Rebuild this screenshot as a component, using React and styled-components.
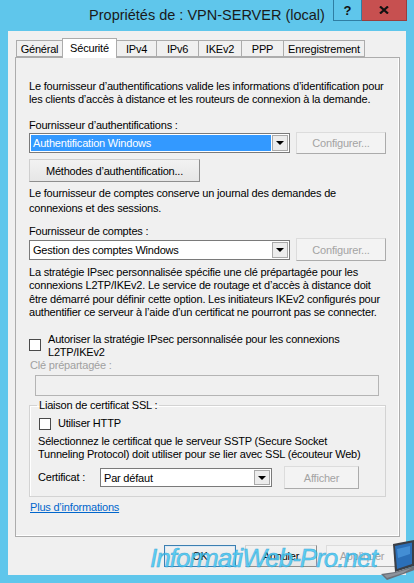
import React from "react";
import styled, { createGlobalStyle, css } from "styled-components";

const Global = createGlobalStyle`
  html, body { margin: 0; padding: 0; background: #5fc6eb; }
  body { font-family: "Liberation Sans", Arial, sans-serif; }
  * { box-sizing: border-box; }
`;

const Window = styled.div`
  position: relative;
  width: 414px;
  height: 583px;
  background: #5fc6eb;
  display: flex;
  flex-direction: column;
  overflow: hidden;
`;

const TitleBar = styled.div`
  height: 31px;
  flex: none;
  display: grid;
  grid-template-columns: 1fr auto 1fr;
  align-items: start;
`;

const Title = styled.div`
  grid-column: 2;
  padding-top: 7px;
  font-size: 14.5px;
  line-height: 16px;
  color: #1a1a1a;
  white-space: nowrap;
`;

const Caption = styled.div`
  grid-column: 3;
  justify-self: end;
  margin-right: 7px;
  display: flex;
`;

const CapBtn = styled.div`
  height: 21px;
  width: ${(p) => p.$w}px;
  display: flex;
  align-items: center;
  justify-content: center;
  border: 1px solid ${(p) => (p.$close ? "#9a3d3d" : "#2f7ea3")};
  border-top: none;
  background: ${(p) => (p.$close ? "#c75050" : "#5fc6eb")};
  font-weight: bold;
  font-size: 13px;
  color: #111;
  & + & { border-left: none; }
`;

const Client = styled.div`
  flex: 1;
  margin: 0 8px 8px;
  background: #f0f0f0;
  display: flex;
  flex-direction: column;
  padding: 7px 6px 8px 7px;
`;

const TabStrip = styled.div`
  display: flex;
  align-items: flex-end;
  height: 20px;
  padding-left: 1px;
  margin-bottom: -1px;
  position: relative;
  z-index: 2;
`;

const Tab = styled.div`
  width: ${(p) => p.$w}px;
  height: ${(p) => (p.$active ? 20 : 17)}px;
  margin-bottom: ${(p) => (p.$active ? 0 : 1)}px;
  border: 1px solid #acacac;
  border-bottom: ${(p) => (p.$active ? "none" : "1px solid #acacac")};
  background: ${(p) => (p.$active ? "#ffffff" : "#f0f0f0")};
  font-size: 11px;
  letter-spacing: -0.2px;
  color: #000;
  display: flex;
  justify-content: center;
  align-items: ${(p) => (p.$active ? "flex-start" : "center")};
  padding-top: ${(p) => (p.$active ? 3 : 1)}px;
  & + & { margin-left: -1px; }
`;

const Panel = styled.div`
  height: 480px;
  border: 1px solid #acacac;
  background: #f0f0f0;
  box-shadow: inset -1px -1px 0 #ffffff;
  padding: 0 13px;
  display: flex;
  flex-direction: column;
  font-size: 11px;
  letter-spacing: -0.2px;
  color: #000;
`;

const Para = styled.div`
  margin-top: ${(p) => p.$mt}px;
  line-height: ${(p) => p.$lh || 13}px;
  white-space: nowrap;
`;

const Label = styled.div`
  margin-top: ${(p) => p.$mt}px;
  margin-left: ${(p) => p.$ml || 0}px;
  line-height: 13px;
  color: ${(p) => (p.$disabled ? "#a0a0a0" : "#000")};
`;

const Row = styled.div`
  margin-top: ${(p) => p.$mt || 0}px;
  height: ${(p) => p.$h}px;
  display: flex;
  align-items: center;
  justify-content: ${(p) => (p.$spread ? "space-between" : "flex-start")};
`;

const Select = styled.div`
  width: ${(p) => p.$w}px;
  height: ${(p) => p.$h || 20}px;
  border: 1px solid #7a7a7a;
  background: #fff;
  display: flex;
  align-items: stretch;
  padding: 1px;
`;

const SelectValue = styled.div`
  flex: 1;
  display: flex;
  align-items: center;
  padding-left: 2px;
  background: ${(p) => (p.$highlight ? "#3399ff" : "transparent")};
  color: ${(p) => (p.$highlight ? "#fff" : "#000")};
  white-space: nowrap;
  overflow: hidden;
`;

const Arrow = styled.div`
  width: 16px;
  margin-left: 1px;
  border: 1px solid #a9a9a9;
  background: #ececec;
  display: flex;
  align-items: center;
  justify-content: center;
  &::after {
    content: "";
    border-left: 4px solid transparent;
    border-right: 4px solid transparent;
    border-top: 4px solid #000;
  }
`;

const Button = styled.div`
  width: ${(p) => p.$w}px;
  height: ${(p) => p.$h || 22}px;
  margin-top: ${(p) => p.$mt || 0}px;
  margin-left: ${(p) => p.$ml || 0}px;
  flex: none;
  display: flex;
  align-items: center;
  justify-content: center;
  font-size: 11px;
  letter-spacing: -0.2px;
  white-space: nowrap;
  border: 1px solid;
  border-color: #cfcfcf #8e8e8e #8e8e8e #cfcfcf;
  background: linear-gradient(#f2f2f2, #e6e6e6);
  color: #000;
  ${(p) =>
    p.$disabled &&
    css`
      color: #a3a3a3;
      background: #f3f3f3;
      border-color: #dcdcdc #ababab #ababab #dcdcdc;
    `}
  ${(p) =>
    p.$default &&
    css`
      border-color: #3c7fb1;
      box-shadow: inset 0 0 0 1px #dbeaf6;
    `}
`;

const CheckRow = styled.div`
  margin-top: ${(p) => p.$mt}px;
  margin-left: ${(p) => p.$ml || 0}px;
  display: flex;
  align-items: flex-start;
  gap: ${(p) => p.$gap}px;
`;

const Box = styled.div`
  flex: none;
  width: 12px;
  height: 12px;
  margin-top: ${(p) => p.$mt || 0}px;
  border: 1px solid #4a4a4a;
  background: #fff;
`;

const CheckLabel = styled.div`
  line-height: ${(p) => p.$lh || 13}px;
`;

const Input = styled.div`
  margin: 3px 0 0 6px;
  width: 344px;
  height: 21px;
  border: 1px solid #b4b4b4;
  background: #f0f0f0;
`;

const Group = styled.fieldset`
  margin: 3px 0 0 0;
  padding: 0 8px 7px 8px;
  border: 1px solid #d3d3d3;
  box-shadow: inset 1px 1px 0 #fff;
  min-width: 0;
`;

const Legend = styled.legend`
  padding: 0 2px;
  margin-left: -1px;
  line-height: 13px;
`;

const CertLabel = styled.div`
  width: 62px;
  line-height: 13px;
`;

const Link = styled.a`
  margin-top: 4px;
  margin-left: 1px;
  line-height: 13px;
  color: #0066cc;
  text-decoration: underline;
  align-self: flex-start;
`;

const Footer = styled.div`
  margin-top: 8px;
  display: flex;
  justify-content: flex-end;
  gap: 9px;
  padding-right: 2px;
`;

const Watermark = styled.div`
  position: absolute;
  left: 150px;
  top: 545px;
  font-family: "Liberation Sans", Arial, sans-serif;
  font-style: italic;
  font-size: 26px;
  line-height: 26px;
  letter-spacing: -1px;
  color: #48caf3;
  -webkit-text-stroke: 0.5px #2a9fd6;
  opacity: 0.88;
  white-space: nowrap;
  pointer-events: none;
`;

const Laptop = styled.svg`
  position: absolute;
  left: 381px;
  top: 540px;
`;

export default function App() {
  return (
    <Window>
      <Global />
      <TitleBar>
        <Title>Propriétés de : VPN-SERVER (local)</Title>
        <Caption>
          <CapBtn $w={29}>?</CapBtn>
          <CapBtn $w={45} $close>
            <svg width="10" height="8" viewBox="0 0 10 8">
              <path d="M1 0.5 L9 7.5 M9 0.5 L1 7.5" stroke="#111" strokeWidth="2.2" />
            </svg>
          </CapBtn>
        </Caption>
      </TitleBar>
      <Client>
        <TabStrip>
          <Tab $w={47}>Général</Tab>
          <Tab $w={55} $active>Sécurité</Tab>
          <Tab $w={41}>IPv4</Tab>
          <Tab $w={43}>IPv6</Tab>
          <Tab $w={44}>IKEv2</Tab>
          <Tab $w={43}>PPP</Tab>
          <Tab $w={82}>Enregistrement</Tab>
        </TabStrip>
        <Panel>
          <Para $mt={22}>
            Le fournisseur d’authentifications valide les informations d’identification pour
            <br />
            les clients d’accès à distance et les routeurs de connexion à la demande.
          </Para>
          <Label $mt={13}>Fournisseur d’authentifications :</Label>
          <Row $h={22} $spread>
            <Select $w={261}>
              <SelectValue $highlight>Authentification Windows</SelectValue>
              <Arrow />
            </Select>
            <Button $w={90} $disabled>Configurer...</Button>
          </Row>
          <Button $w={171} $h={23} $mt={5}>Méthodes d’authentification...</Button>
          <Para $mt={4} $lh={15}>
            Le fournisseur de comptes conserve un journal des demandes de
            <br />
            connexions et des sessions.
          </Para>
          <Label $mt={9}>Fournisseur de comptes :</Label>
          <Row $h={23} $spread>
            <Select $w={261}>
              <SelectValue>Gestion des comptes Windows</SelectValue>
              <Arrow />
            </Select>
            <Button $w={90} $h={23} $disabled>Configurer...</Button>
          </Row>
          <Para $mt={5} $lh={13.3}>
            La stratégie IPsec personnalisée spécifie une clé prépartagée pour les
            <br />
            connexions L2TP/IKEv2. Le service de routage et d’accès à distance doit
            <br />
            être démarré pour définir cette option. Les initiateurs IKEv2 configurés pour
            <br />
            authentifier ce serveur à l’aide d’un certificat ne pourront pas se connecter.
          </Para>
          <CheckRow $mt={14} $gap={7}>
            <Box $mt={6} />
            <CheckLabel $lh={12.5}>
              Autoriser la stratégie IPsec personnalisée pour les connexions
              <br />
              L2TP/IKEv2
            </CheckLabel>
          </CheckRow>
          <Label $mt={1} $ml={1} $disabled>Clé prépartagée :</Label>
          <Input />
          <Group>
            <Legend>Liaison de certificat SSL :</Legend>
            <CheckRow $mt={5} $ml={1} $gap={7}>
              <Box $mt={1} />
              <CheckLabel>Utiliser HTTP</CheckLabel>
            </CheckRow>
            <Para $mt={5}>
              Sélectionnez le certificat que le serveur SSTP (Secure Socket
              <br />
              Tunneling Protocol) doit utiliser pour se lier avec SSL (écouteur Web)
            </Para>
            <Row $mt={5} $h={23}>
              <CertLabel>Certificat :</CertLabel>
              <Select $w={172} $h={19}>
                <SelectValue>Par défaut</SelectValue>
                <Arrow />
              </Select>
              <Button $w={75} $h={23} $ml={12} $disabled>Afficher</Button>
            </Row>
          </Group>
          <Link>Plus d’informations</Link>
        </Panel>
        <Footer>
          <Button $w={72} $default>OK</Button>
          <Button $w={72}>Annuler</Button>
          <Button $w={72} $disabled>Appliquer</Button>
        </Footer>
      </Client>
      <Watermark>InformatiWeb-Pro.net</Watermark>
      <Laptop width="34" height="44" viewBox="0 0 34 44">
        <path d="M12 4 L33 0 L33 26 L14 32 Z" fill="#3a3f47" />
        <path d="M14 6 L31 2.5 L31 24 L16 29 Z" fill="#2a6fb8" />
        <path d="M16 9 L29 6 L29 14 L17 18 Z" fill="#4f9be0" opacity="0.7" />
        <path d="M0 34 L14 32 L33 26 L34 30 L6 40 Z" fill="#6b7078" />
        <path d="M3 35 L14 33 L31 28 L22 33 L6 38 Z" fill="#8d939b" />
      </Laptop>
    </Window>
  );
}
